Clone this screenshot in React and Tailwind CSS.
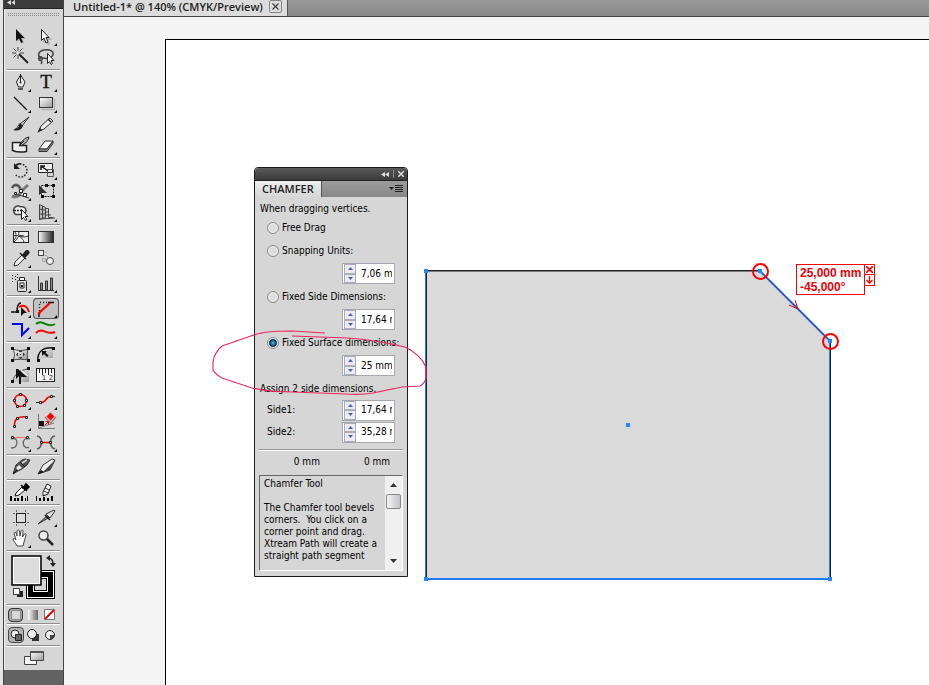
import { useState } from "react";

const Corner = () => <path d="M24 17v3h-3z" fill="#000" />;

const icons = {
  selection: (
    <>
      <path d="M10 4v12l3-3 2 5 2-1-2-4h4z" fill="#777" opacity=".4" />
      <path d="M9 3v12l3-2.500 2 4.500 2-1-2-4h3.500z" fill="#111" />
    </>
  ),
  direct: (
    <>
      <path d="M10 5v12l3-3 2 5 2-1-2-4h4z" fill="#777" opacity=".4" />
      <path d="M8.500 3.500v11l2.500-2.500 2 5 2-1-2-4.500h3z" fill="#fff" stroke="#222" />
      <Corner />
    </>
  ),
  wand: (
    <>
      <path d="M11 0v4M11 8v4M5 6h4M13 6h4M6.500 1.500l3 3M12.500 4.500l3-3M6.500 10.500l3-3" stroke="#444" />
      <path d="M12 7l9 9" stroke="#222" strokeWidth="2" />
    </>
  ),
  lasso: (
    <>
      <path d="M8 12C4 9 5 4 11 3c6-1 10 1 9 5-1 3-6 4-10 3M9 10c-3-1-4 1-3 3 2 1 4 0 3-3M8 13c1 1 1 3 0 4" fill="none" stroke="#444" strokeWidth="1.500" />
      <path d="M14.500 6.500v10l2-2 1.500 3 1.500-1-1.500-3h3z" fill="#fff" stroke="#222" />
    </>
  ),
  pen: (
    <>
      <path d="M13.500 2v2M13.500 3L9.500 10l2 5h4.500l2-5z" fill="#eee" stroke="#222" />
      <path d="M13.500 4v6" stroke="#222" />
      <circle cx="13.500" cy="10.500" r="1" fill="#222" />
      <path d="M11 16h5v2h-5z" fill="#555" />
      <Corner />
    </>
  ),
  type: (
    <>
      <text x="13" y="16" textAnchor="middle" fontSize="19" fontFamily="Liberation Serif, serif" fill="#111" stroke="#111" strokeWidth=".3">T</text>
      <Corner />
    </>
  ),
  line: (
    <>
      <path d="M7 4l13 13" stroke="#111" strokeWidth="1.300" />
      <Corner />
    </>
  ),
  rectangle: (
    <>
      <path d="M8 16.500h13.500V6" fill="none" stroke="#aaa" />
      <rect x="6.500" y="4.500" width="13" height="10" fill="url(#soft)" stroke="#333" />
      <Corner />
    </>
  ),
  brush: (
    <>
      <path d="M22 3L13 10l2 2z" fill="#ddd" stroke="#222" />
      <path d="M13 9l3 3c-2 5-6 5-10 4 3-1 4-4 7-7z" fill="#222" />
      <path d="M9 14l3-2" stroke="#bbb" />
    </>
  ),
  pencil: (
    <>
      <path d="M6 17l2-5L17 4l3 3-9 8z" fill="#eee" stroke="#333" />
      <path d="M15 5l3 3M6 17l2-1-1-1z" stroke="#222" strokeWidth="1.500" />
      <Corner />
    </>
  ),
  blob: (
    <>
      <path d="M5.500 7.500h8v3h6v6c-5 1-9 1-14-1z" fill="#eee" stroke="#222" strokeWidth="1.500" />
      <path d="M22 2c-5 1-7 4-10 9 5-1 9-4 10-9z" fill="#aaa" stroke="#222" />
      <path d="M12 11l5-5" stroke="#222" />
    </>
  ),
  eraser: (
    <>
      <path d="M6 14l6-8h8l-6 8z" fill="#f5f5f5" stroke="#333" />
      <path d="M6 14v2.500h8l6-8V6l-6 8z" fill="#888" stroke="#333" />
      <Corner />
    </>
  ),
  rotate: (
    <>
      <path d="M10 5a6.500 6.500 0 1 1-2 9" fill="none" stroke="#222" strokeWidth="1.500" strokeDasharray="1.500 1.500" />
      <path d="M14 4C11 3 9 5 8 7" fill="none" stroke="#222" strokeWidth="1.500" />
      <path d="M7 3v6h6z" fill="#222" />
      <Corner />
    </>
  ),
  scale: (
    <>
      <path d="M5.500 3.500h14v9h-14z" fill="#eee" stroke="#222" />
      <path d="M14.500 9.500h6v7h-6z" fill="none" stroke="#555" />
      <path d="M8 6l7 5M8 10V6h4" fill="none" stroke="#111" strokeWidth="1.500" />
      <Corner />
    </>
  ),
  warp: (
    <>
      <path d="M5 7c2-4 6-4 8 0s-4 8 8-3M5 15c7 3 8-3 10-6" fill="none" stroke="#777" strokeWidth="3" />
      <path d="M5 7c2-4 6-4 8 0M8 13l14 4" fill="none" stroke="#333" />
      <path d="M12.500 8.500h3v3h-3zM16.500 12.500h3v3h-3zM7.500 11.500h2v2h-2z" fill="#fff" stroke="#222" />
      <Corner />
    </>
  ),
  free: (
    <>
      <path d="M8.500 4.500h12v11h-12z" fill="none" stroke="#111" strokeDasharray="2 1" />
      <path d="M6 4v10l3-2h5z" fill="#333" />
      <path d="M19 3h3v3h-3zM19 14h3v3h-3zM8 14h3v3H8zM12 3h3v3h-3z" fill="#111" />
    </>
  ),
  shapeBuilder: (
    <>
      <path d="M9 12.500a4 4 0 1 1 4-8c6 0 6 3 6 4s-1 4-5 4z" fill="#eee" stroke="#444" strokeWidth="1.500" />
      <path d="M7 8.500h9" stroke="#222" strokeWidth="1.500" strokeDasharray="2 1" />
      <path d="M14.500 7.500v10l2-2 2 3 1.500-1-2-3h3z" fill="#fff" stroke="#222" />
      <Corner />
    </>
  ),
  perspective: (
    <>
      <path d="M6.500 2.500l6 3v10l-6 2z" fill="#bbb" stroke="#444" />
      <path d="M9.500 4v13M6 7l6 1M6 12h7M12.500 6.500h3v9h5M12 10h4M12 13h6M6 17l16-1" fill="none" stroke="#444" />
      <Corner />
    </>
  ),
  mesh: (
    <>
      <rect x="6.500" y="4.500" width="15" height="11" fill="#eee" stroke="#222" />
      <path d="M6 9c5-2 9 3 15 0M7 15c5-4 3-8 10-6M12 5c-2 4 4 6 5 10M8 5c2 3 1 6-1 8" fill="none" stroke="#333" />
    </>
  ),
  gradient: <rect x="5.500" y="4.500" width="15" height="11" fill="url(#ramp)" stroke="#333" />,
  eyedropper: (
    <>
      <path d="M7 18l1-4 7-7 3 3-7 7z" fill="#eee" stroke="#333" />
      <path d="M13 5l6 6M16 7l3-4c2-1 4 1 2 3l-3 3z" fill="#222" stroke="#222" strokeWidth="1.500" />
      <Corner />
    </>
  ),
  blend: (
    <>
      <rect x="5.500" y="2.500" width="5" height="5" fill="#eee" stroke="#444" />
      <path d="M9.500 10.500h3v3h-3z" fill="#ccc" stroke="#888" strokeDasharray="1 1" />
      <circle cx="17" cy="13" r="3.500" fill="#eee" stroke="#444" />
      <path d="M13 4v5h4" fill="none" stroke="#777" strokeDasharray="1 2" />
    </>
  ),
  sprayer: (
    <>
      <rect x="10.500" y="7.500" width="9" height="11" rx="1" fill="#ddd" stroke="#222" />
      <path d="M12.500 4.500h5v3h-5zM13 10h4v5h-4z" fill="#fff" stroke="#222" />
      <path d="M14 12h2v2h-2zM5 2h1v1H5zM5 5h1v1H5zM8 3h1v1H8zM8 6h1v1H8zM10 1h1v1h-1zM10 4h1v1h-1zM5 8h1v1H5z" fill="#111" />
      <Corner />
    </>
  ),
  graph: (
    <>
      <path d="M5.500 3v14.500H21" fill="none" stroke="#333" />
      <path d="M7.500 10h2v7h-2zM12.500 8h2v9h-2zM17.500 5h2v12h-2z" fill="#888" stroke="#333" />
      <Corner />
    </>
  ),
  arcPoint: (
    <>
      <path d="M4 14h6c0-5 1-9 4-9" fill="none" stroke="#111" strokeWidth="1.500" />
      <path d="M12 9c5-3 9 0 10 5" fill="none" stroke="#f00" strokeWidth="2" />
      <path d="M14 9v9l3-3h3z" fill="#111" />
      <path d="M9 12h3v3H9z" fill="#111" />
      <Corner />
    </>
  ),
  chamfer: (
    <>
      <path d="M6.500 16V4.500H14" fill="none" stroke="#222" strokeWidth="1.500" strokeDasharray="1 2" />
      <path d="M15 4.500h6" stroke="#111" strokeWidth="1.500" />
      <path d="M6 17v-2L17 5" fill="none" stroke="#f00" strokeWidth="2.200" />
      <path d="M6 17v2" stroke="#111" strokeWidth="1.500" />
      <Corner />
    </>
  ),
  bluePath: (
    <>
      <path d="M5 5h10v11l7-7" fill="none" stroke="#00f" strokeWidth="2" />
      <Corner />
    </>
  ),
  waves: (
    <>
      <path d="M3 5c7-6 10 5 19 0" fill="none" stroke="#080" strokeWidth="2" />
      <path d="M3 14c7-7 10 3 19-1" fill="none" stroke="#f00" strokeWidth="2" />
      <Corner />
    </>
  ),
  envelope: (
    <>
      <path d="M6 5c5 2 10 2 15 0-1 3-1 8 0 11-5-1-10-1-15 0 2-4 2-7 0-11z" fill="url(#soft)" stroke="#444" />
      <path d="M4 3h3v3H4zM20 3h3v3h-3zM4 15h3v3H4zM20 15h3v3h-3z" fill="#111" />
      <path d="M13.500 6l2 2h-4zM13.500 15l2-2h-4zM9 10.500l2-2v4zM18 10.500l-2-2v4zM13 10h1v1h-1z" fill="#333" />
    </>
  ),
  roundCorner: (
    <>
      <path d="M5 16C5 7 9 4 20 4v10H9l-2 3z" fill="url(#soft)" />
      <path d="M5 17C4 8 10 3 20 4" fill="none" stroke="#111" strokeWidth="1.500" />
      <path d="M4 15h3v3H4zM19 3h3v3h-3z" fill="#111" />
      <path d="M9 7h5l-1.500 1.500 3 3-1.500 1.500-3-3L9 12z" fill="#111" />
    </>
  ),
  curveEdit: (
    <>
      <path d="M6 17C8 9 13 5 22 4v13z" fill="url(#soft)" />
      <path d="M6 16C7 9 13 5 21 4" fill="none" stroke="#444" />
      <path d="M4 15h3v3H4zM20 2h3v3h-3z" fill="#111" />
      <path d="M11 4l9 8h-6v7h-2v-8l-3 3V4z" fill="#111" />
      <path d="M14 5l7 6" stroke="#fff" />
    </>
  ),
  ruler: (
    <>
      <rect x="3.500" y="3.500" width="18" height="13" fill="#f4f4f4" stroke="#222" />
      <path d="M6.500 4v4M9.500 4v6M12.500 4v4M15.500 4v6M18.500 4v4" stroke="#222" />
      <text x="9" y="15" fontSize="7" fontFamily="Liberation Sans, sans-serif" fill="#222">1</text>
      <text x="16" y="15" fontSize="7" fontFamily="Liberation Sans, sans-serif" fill="#222">2</text>
    </>
  ),
  redCircle: (
    <>
      <circle cx="13.500" cy="10.500" r="6" fill="none" stroke="#f00" strokeWidth="1.600" />
      <path d="M12.500 3.500h2v2h-2zM6.500 9.500h2v2h-2zM18.500 9.500h2v2h-2zM9.500 15.500h2v2h-2zM16.500 14.500h2v2h-2z" fill="#fff" stroke="#222" />
      <Corner />
    </>
  ),
  redCurve: (
    <>
      <path d="M3 12.500h4M19 6.500h3" stroke="#222" />
      <path d="M8 12.500c6 0 4-6 10-6" fill="none" stroke="#f00" strokeWidth="1.500" />
      <path d="M6.500 11.500h2v2h-2zM17.500 5.500h2v2h-2z" fill="#fff" stroke="#222" />
      <Corner />
    </>
  ),
  redArc: (
    <>
      <path d="M7.500 15C7 8 11 5 20 6" fill="none" stroke="#f00" strokeWidth="1.600" />
      <path d="M6.500 14.500h2v2h-2zM9.500 6.500h2v2h-2zM18.500 5.500h2v2h-2z" fill="#fff" stroke="#222" />
      <Corner />
    </>
  ),
  diamond: (
    <>
      <path d="M5.500 3v14.500H22M5 17L21 12" fill="none" stroke="#777" />
      <path d="M12 6l5.500 6L23 6" fill="none" stroke="#888" strokeWidth="1.500" />
      <path d="M17.500 1.500l4 4-4 4-4-4z" fill="#f00" />
      <path d="M6 10h5v5H6z" fill="#111" />
      <path d="M12 14l3-3M12.500 10.500h3v3" fill="none" stroke="#f00" />
    </>
  ),
  tangent: (
    <>
      <path d="M4 7c6-2 7 3 5 7-1 2-4 2-5 2M23 7c-6-2-8 3-6 7 2 2 4 2 5 1" fill="none" stroke="#666" strokeWidth="1.300" />
      <path d="M7 5.500h12" stroke="#f66" />
      <path d="M4.500 4.500h2v2h-2zM19.500 4.500h2v2h-2z" fill="#fff" stroke="#222" />
      <Corner />
    </>
  ),
  connect: (
    <>
      <path d="M4 4c6 1 6 11 0 13M22 4c-6 1-6 11 0 13" fill="none" stroke="#555" strokeWidth="1.500" />
      <path d="M9 10.500h8" stroke="#f00" strokeWidth="1.500" />
      <path d="M7.500 9.500h2v2h-2zM16.500 9.500h2v2h-2z" fill="#fff" stroke="#222" />
      <Corner />
    </>
  ),
  inkPen: (
    <>
      <path d="M6 17l3-9 6-5 3-1 5 1-3 5-5 4-4 2z" fill="#555" stroke="#333" />
      <path d="M9 11l3-3 3 3-4 2z" fill="#eee" />
      <path d="M15 6l5-3" stroke="#ddd" strokeWidth="1.500" />
      <path d="M6 17l4-4M13 5l5 5" stroke="#111" />
    </>
  ),
  marker: (
    <>
      <path d="M5 17l5-9 9-6 3 1-5 10z" fill="#eee" stroke="#333" />
      <path d="M12 13L22 3l-5 10-7 2z" fill="#444" />
      <path d="M5 17l6-2-3-2z" fill="#111" />
    </>
  ),
  barDropper: (
    <>
      <path d="M3 14h2v5H3zM7 16h2v3H7zM10 16h2v3h-2zM14 14h2v5h-2zM18 16h1v3h-1zM20 14h1v5h-1z" fill="#000" />
      <path d="M8 14l1-3 6-6 3 3-6 5z" fill="#fff" stroke="#111" />
      <path d="M14 3l6 6M16 6l3-4 3 3-3 3z" fill="#000" stroke="#000" strokeWidth="1.500" />
    </>
  ),
  barPencil: (
    <>
      <path d="M3 14h1v5H3zM6 16h2v3H6zM10 15h2v4h-2zM14 16h2v3h-2zM18 14h2v5h-2z" fill="#000" />
      <path d="M10 14V10l4-8 4 2-3 8z" fill="#fff" stroke="#222" />
      <path d="M12 6l4 2M11 9l4 2M10 14l2-1" stroke="#222" />
    </>
  ),
  artboard: (
    <>
      <rect x="9.500" y="6.500" width="9" height="9" fill="#ddd" stroke="#222" />
      <path d="M6 6.500h2M20 6.500h2M6 15.500h2M20 15.500h2M9.500 3v2M18.500 3v2M9.500 17v2M18.500 17v2" stroke="#666" />
    </>
  ),
  slice: (
    <>
      <path d="M5 17L15 8l2 2z" fill="#888" stroke="#333" />
      <path d="M13 7l4 4 5-7-1-1z" fill="#ddd" stroke="#333" />
      <path d="M12 8l5 5" stroke="#111" strokeWidth="1.500" />
      <Corner />
    </>
  ),
  hand: (
    <>
      <path d="M10 18c-1-3-4-5-4-7 1-1 2 0 3 1L7 5c1-2 2-1 3 3V3c1-2 2-1 2.500 0l.5 5 1-5c1-2 2-1 2 1l-.5 5 2-3c1-1 2 0 1.500 1L17 14l-1 4z" fill="#fff" stroke="#444" />
      <Corner />
    </>
  ),
  zoom: (
    <>
      <circle cx="10.500" cy="7.500" r="4.500" fill="#eee" stroke="#444" strokeWidth="1.500" />
      <path d="M14 11l6 6" stroke="#222" strokeWidth="2.500" />
    </>
  ),
};

const toolGroups = [
  ["selection", "direct", "wand", "lasso"],
  ["pen", "type", "line", "rectangle", "brush", "pencil", "blob", "eraser"],
  ["rotate", "scale", "warp", "free", "shapeBuilder", "perspective"],
  ["mesh", "gradient", "eyedropper", "blend"],
  ["sprayer", "graph"],
  ["arcPoint", "chamfer", "bluePath", "waves"],
  ["envelope", "roundCorner", "curveEdit", "ruler"],
  ["redCircle", "redCurve", "redArc", "diamond", "tangent", "connect"],
  ["inkPen", "marker"],
  ["barDropper", "barPencil"],
  ["artboard", "slice", "hand", "zoom"],
];

function Divider() {
  return <div className="my-px h-0.5 border-t border-[#8e8e8e] bg-white" />;
}

function ToolGroup({ tools, active, onPick }) {
  return (
    <>
      <div className="grid grid-cols-[26px_26px]">
        {tools.map((name) => (
          <button
            key={name}
            aria-label={name}
            onClick={() => onPick(name)}
            className={
              active === name
                ? "h-[21px] rounded-sm bg-[#c2c2c2] inset-ring-1 inset-ring-[#555]"
                : "h-[21px]"
            }
          >
            <svg viewBox="0 0 26 21" className="block h-[21px] w-[26px]" fill="none">
              {icons[name]}
            </svg>
          </button>
        ))}
      </div>
      <Divider />
    </>
  );
}

function Toolbar() {
  const [tool, setTool] = useState("chamfer");

  return (
    <aside className="flex w-[61px] shrink-0 flex-col border-x border-[#444] bg-[#636363]">
      <div className="flex h-[9px] items-start border-b border-[#222] bg-[#3c3c3c] pl-[3px]">
        <svg width="9" height="6" viewBox="0 0 9 6" fill="#ddd">
          <path d="M4 0v5L0 2.500zM8 0v5L4.500 2.500z" />
        </svg>
      </div>
      <div className="border-l border-[#eee] bg-[#d6d6d6] pr-[3px] pb-1 pl-[2px]">
        <div className="flex h-[17px] flex-col items-center gap-px pt-[4px]">
          <div className="w-[51px] border-t border-dotted border-[#888]" />
          <div className="w-[51px] border-t border-dotted border-[#888]" />
        </div>
        {toolGroups.map((tools) => (
          <ToolGroup key={tools[0]} tools={tools} active={tool} onPick={setTool} />
        ))}

        {/* Fill and stroke */}
        <svg viewBox="0 0 53 50" className="block h-[50px] w-[53px]" fill="none">
          <rect x="19" y="17" width="29" height="29" fill="#000" />
          <rect x="20.500" y="18.500" width="26" height="26" stroke="#fff" />
          <rect x="26.500" y="24.500" width="14" height="14" fill="#d6d6d6" stroke="#fff" />
          <rect x="27.500" y="25.500" width="12" height="12" stroke="#000" />
          <rect x="5" y="3" width="29" height="29" fill="#dcdcdc" stroke="#000" strokeWidth="1.500" />
          <rect x="6.500" y="4.500" width="26" height="26" stroke="#fff" />
          <path d="M41 5c3 0 5 1 5 6" stroke="#222" strokeWidth="1.500" />
          <path d="M39 5l4-3v6zM43 10h6l-3 4z" fill="#222" />
          <path d="M10 38h6v6h-6z" fill="#222" />
          <rect x="6.500" y="35.500" width="6" height="6" fill="#fff" stroke="#444" />
        </svg>
        <Divider />

        {/* Color, gradient, none */}
        <div className="grid h-[15px] grid-cols-[17px_17px_17px] place-items-center">
          <button aria-label="Color" className="flex h-[14px] w-[15px] items-center justify-center rounded-sm border border-[#333] bg-[#aaa]">
            <span className="h-2.5 w-2.5 border border-[#888] bg-[#d6d6d6]" />
          </button>
          <button aria-label="Gradient" className="h-[10px] w-[10px] bg-linear-to-r from-white to-[#666]" />
          <button aria-label="None">
            <svg width="11" height="11" viewBox="0 0 11 11">
              <path d="M.5.5h10v10H.5z" fill="#fff" stroke="#777" />
              <path d="M1 10l9-9" stroke="#e00" strokeWidth="2" />
            </svg>
          </button>
        </div>
        <Divider />

        {/* Drawing modes */}
        <div className="grid h-[18px] grid-cols-[17px_17px_17px] place-items-center">
          <button aria-label="Draw normal" className="flex h-[16px] w-[16px] items-center justify-center rounded-sm border border-[#444] bg-[#b5b5b5]">
            <svg width="14" height="14" viewBox="0 0 14 14" className="shrink-0">
              <circle cx="6" cy="6" r="4" fill="#eee" stroke="#222" />
              <path d="M6.500 6.500h6v6h-6z" fill="#666" stroke="#222" />
            </svg>
          </button>
          <button aria-label="Draw behind">
            <svg width="14" height="14" viewBox="0 0 14 14">
              <path d="M6 6h7v7H6z" fill="#333" />
              <circle cx="6" cy="6" r="4.500" fill="#eee" stroke="#222" />
            </svg>
          </button>
          <button aria-label="Draw inside">
            <svg width="14" height="14" viewBox="0 0 14 14">
              <circle cx="7" cy="7" r="4.500" fill="#eee" stroke="#222" />
              <path d="M7 7h4.500A4.500 4.500 0 0 1 7 11.500z" fill="#444" />
            </svg>
          </button>
        </div>
        <Divider />
        <button aria-label="Screen mode" className="mx-auto block">
          <svg width="24" height="18" viewBox="0 0 24 18">
            <path d="M2.500 8.500h12v8h-12z" fill="#f4f4f4" stroke="#444" />
            <path d="M8.500 3.500h13v9h-13z" fill="url(#soft)" stroke="#444" />
            <path d="M9 3h12v2H9z" fill="#555" />
          </svg>
        </button>
      </div>
    </aside>
  );
}

function Spinner({ label, value }) {
  return (
    <div className="flex h-[21px] w-[53px] border border-[#a5a8b0] bg-white">
      <div className="flex w-[13px] shrink-0 flex-col pl-px">
        <button aria-label={`${label} up`} className="flex flex-1 items-center justify-center border border-[#aaaebc] bg-[#ececf0]">
          <svg width="5" height="3" viewBox="0 0 5 3" fill="#4a63b5">
            <path d="M2.500 0L5 3H0z" />
          </svg>
        </button>
        <button aria-label={`${label} down`} className="flex flex-1 items-center justify-center border border-[#aaaebc] bg-[#ececf0]">
          <svg width="5" height="3" viewBox="0 0 5 3" fill="#4a63b5">
            <path d="M0 0h5L2.500 3z" />
          </svg>
        </button>
      </div>
      <input aria-label={label} defaultValue={value} className="mr-[2px] ml-[5px] w-0 min-w-0 flex-1 outline-none" />
    </div>
  );
}

function Mode({ label, value, checked }) {
  return (
    <>
      <label className="flex h-[23px] items-center gap-[3px] pl-3 whitespace-nowrap">
        <input
          type="radio"
          name="mode"
          defaultChecked={checked}
          className="h-3 w-3 shrink-0 appearance-none rounded-full border border-[#888] bg-[#dedede] shadow-[inset_0_0_0_1px_#f4f4f4] checked:bg-[radial-gradient(circle,#5fc4ea_0,#0b3d66_3px,#0b3d66_4px,#fff_5px)]"
        />
        {label}
      </label>
      {value && (
        <div className="flex h-[23px] items-center justify-end pr-3">
          <Spinner label={label} value={value} />
        </div>
      )}
    </>
  );
}

function ChamferPalette() {
  return (
    <section className="absolute left-[88px] top-[127px] w-[154px] rounded-t border border-[#1c1c1c] bg-[#d6d6d6] font-['DejaVu_Sans_Condensed','DejaVu_Sans',sans-serif] text-[10px] leading-3 text-black">
      <div className="flex h-3 items-center justify-end gap-1 rounded-t bg-linear-to-b from-[#5a5a5a] to-[#3a3a3a] pr-[3px]">
        <button aria-label="Collapse">
          <svg width="8" height="5" viewBox="0 0 8 5" fill="#ddd">
            <path d="M4 0v5L0 2.500zM8 0v5L4 2.500z" />
          </svg>
        </button>
        <span className="h-2 w-px bg-[#888]" />
        <button aria-label="Close">
          <svg width="6" height="6" viewBox="0 0 6 6" stroke="#ddd" strokeWidth="1.500">
            <path d="M0 0l6 6M6 0L0 6" />
          </svg>
        </button>
      </div>
      <div className="flex h-[17px] border-t border-[#222] bg-linear-to-b from-[#9c9c9c] to-[#878787]">
        <h2 className="border-r border-[#555] bg-linear-to-b from-[#eee] to-[#d6d6d6] px-[7px] font-['Open_Sans',sans-serif] text-[11px] leading-4 font-semibold text-[#222]">
          CHAMFER
        </h2>
        <button aria-label="Palette menu" className="ml-auto pr-1">
          <svg width="14" height="8" viewBox="0 0 14 8">
            <path d="M0 2h5L2.500 5z" fill="#222" />
            <path d="M6 .5h8M6 2.500h8M6 4.500h8M6 6.500h8" stroke="#222" />
          </svg>
        </button>
      </div>

      <p className="pt-[6px] pb-px pl-[5px]">When dragging vertices.</p>
      <Mode label="Free Drag" />
      <Mode label="Snapping Units:" value="7,06 mm" />
      <Mode label="Fixed Side Dimensions:" value="17,64 mm" />
      <Mode label="Fixed Surface dimensions:" value="25 mm" checked />
      <p className="pt-[6px] pb-1 pl-[5px]">Assign 2 side dimensions.</p>
      <div className="flex h-[22px] items-center justify-between pr-3 pl-3">
        Side1:
        <Spinner label="Side1" value="17,64 mm" />
      </div>
      <div className="flex h-[22px] items-center justify-between pr-3 pl-3">
        Side2:
        <Spinner label="Side2" value="35,28 mm" />
      </div>
      <div className="mx-1 mt-[6px] border-t border-[#999] bg-white pb-px" />
      <div className="flex justify-end gap-11 pt-[5px] pr-[17px] pb-[7px]">
        <span>0 mm</span>
        <span>0 mm</span>
      </div>

      {/* Help text */}
      <div className="mx-1 mb-[5px] flex h-[96px] border border-t-[#666] border-r-white border-b-white border-l-[#666]">
        <div className="flex-1 overflow-hidden pt-[2px] pl-1 whitespace-pre">
          {"Chamfer Tool\n\nThe Chamfer tool bevels\ncorners.  You click on a\ncorner point and drag.\nXtream Path will create a\nstraight path segment"}
        </div>
        <div className="flex w-[17px] shrink-0 flex-col items-center bg-[#f0f0f0]">
          <button aria-label="Scroll up" className="p-[7px]">
            <svg width="7" height="4" viewBox="0 0 7 4">
              <path d="M3.500 0L7 4H0z" fill="#333" />
            </svg>
          </button>
          <div className="h-[15px] w-[15px] rounded-xs border border-[#888] bg-linear-to-r from-[#f4f4f4] to-[#c4c4c8]" />
          <button aria-label="Scroll down" className="mt-auto p-[7px]">
            <svg width="7" height="4" viewBox="0 0 7 4">
              <path d="M0 0h7L3.500 4z" fill="#333" />
            </svg>
          </button>
        </div>
      </div>
    </section>
  );
}

function Artwork() {
  return (
    <svg className="absolute inset-0 h-full w-full" fill="none">
      <path d="M260 231h334l70 70v238h-404z" fill="#dadada" />
      <path d="M260 230.500h334M260.500 231v308M664.500 301v238" stroke="#222" />
      <path d="M260 231.500h334" stroke="#222" opacity=".5" />
      <path d="M259.500 231v308M663.500 301v238" stroke="#1f7cf5" />
      <path d="M260 539h404" stroke="#1f7cf5" strokeWidth="2" />
      <path d="M594 231l70 70" stroke="#1f7cf5" strokeWidth="2" />
      <path d="M594 231l70 70" stroke="#802040" strokeWidth=".8" />
      <path d="M623 265l9 4-3-9" stroke="#d01010" />
      <path d="M258 229h4v4h-4zM592 229h4v4h-4zM662 299h4v4h-4zM258 537h4v4h-4zM662 537h4v4h-4zM460 383h4v4h-4z" fill="#2a84ff" />
      <circle cx="594.500" cy="231.500" r="7.500" stroke="#f00" strokeWidth="2" />
      <circle cx="664.500" cy="301.500" r="7.500" stroke="#f00" strokeWidth="2" />
    </svg>
  );
}

function Measurement() {
  return (
    <div className="absolute left-[630px] top-[224px] flex items-start font-['Liberation_Sans',Arial,sans-serif] text-[12px] leading-[14px] font-bold text-[#e8000b]">
      <div className="border border-[#f00] bg-white px-[3px] pt-px whitespace-nowrap">
        25,000 mm
        <br />
        -45,000°
      </div>
      <div className="-ml-px flex flex-col">
        <button aria-label="Close measurement" className="border border-[#f00] bg-white p-px">
          <svg width="7" height="7" viewBox="0 0 7 7" stroke="#f00" strokeWidth="1.700">
            <path d="M0 0l7 7M7 0L0 7" />
          </svg>
        </button>
        <button aria-label="Pin measurement" className="-mt-px border border-[#f00] bg-white p-px">
          <svg width="7" height="8" viewBox="0 0 7 8" stroke="#f00" strokeWidth="1.300" fill="none">
            <path d="M3.500 0v7M.5 4l3 3 3-3" />
          </svg>
        </button>
      </div>
    </div>
  );
}

export default function App() {
  return (
    <div className="flex min-h-screen overflow-hidden bg-[#e4e4e4]">
      {/* Shared gradients for the tool icons */}
      <svg className="absolute h-0 w-0">
        <defs>
          <linearGradient id="soft" x1="0" y1="0" x2="1" y2="1">
            <stop offset="0" stopColor="#fff" />
            <stop offset="1" stopColor="#999" />
          </linearGradient>
          <linearGradient id="ramp">
            <stop offset="0" stopColor="#fff" />
            <stop offset="1" stopColor="#222" />
          </linearGradient>
        </defs>
      </svg>

      <div className="w-[3px] shrink-0" />
      <Toolbar />

      <main className="flex min-w-0 flex-1 flex-col bg-[#f4f4f4]">
        <div className="flex h-[17px] border-b border-[#444] bg-linear-to-b from-[#999] to-[#888]">
          <div className="flex items-center gap-[6px] border-r border-[#555] bg-[#dcdcdc] pr-[5px] pb-[3px] pl-[9px] font-['Open_Sans',sans-serif] text-[11px] leading-3 font-semibold whitespace-nowrap text-[#222]">
            Untitled-1* @ 140% (CMYK/Preview)
            <button aria-label="Close document" className="rounded-xs border border-[#888] p-[2px]">
              <svg width="7" height="7" viewBox="0 0 7 7" stroke="#444" strokeWidth="1.200">
                <path d="M.5.5l6 6M6.500.5l-6 6" />
              </svg>
            </button>
          </div>
        </div>

        {/* Artboard */}
        <div className="relative mt-[22px] ml-[101px] flex-1 border-t border-l border-black bg-white">
          <Artwork />
          <Measurement />
          <ChamferPalette />
          <svg className="pointer-events-none absolute left-[40px] top-[280px]" width="230" height="84" viewBox="0 0 230 84" fill="none">
            <path
              d="M119 13L86 11Q72 11 62 12Q52 13 42 17L16 26Q8 33 7 42V50Q9 54 16 58L46 68Q64 72 86 72L140 74Q156 75 167 73L196 67L214 66Q219 63 220 58V47Q214 34 199 27Q170 20 142 18L86 16"
              stroke="#f02860"
              strokeWidth="1.200"
            />
          </svg>
        </div>
      </main>
    </div>
  );
}
